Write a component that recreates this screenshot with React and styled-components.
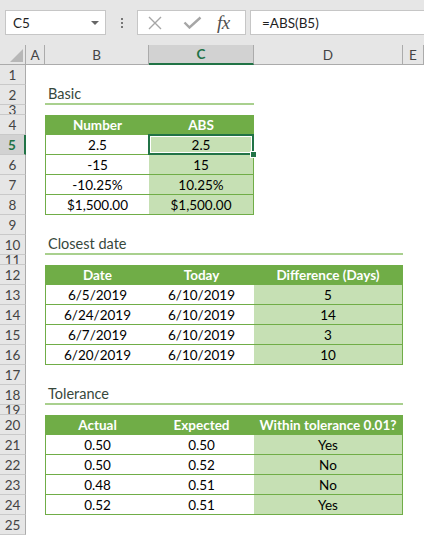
import React from "react";
import styled, { createGlobalStyle, css } from "styled-components";

const GREEN = "#70ad47";
const LIGHT = "#c6e0b4";
const EXCEL = "#217346";

const GlobalStyle = createGlobalStyle`
  html, body { margin: 0; padding: 0; background: #fff; }
  body {
    font-family: Lato, "Liberation Sans", sans-serif;
    width: 424px;
    height: 536px;
    overflow: hidden;
  }
`;

const Page = styled.div`
  width: 424px;
  height: 536px;
  overflow: hidden;
  background: #fff;
`;

/* ---------- formula bar ---------- */

const FormulaBar = styled.div`
  height: 45px;
  box-sizing: border-box;
  padding: 10px 0 0 5px;
  background: #e6e6e6;
  display: flex;
  align-items: flex-start;
`;

const Box = styled.div`
  height: 25px;
  box-sizing: border-box;
  background: #fff;
  border: 1px solid #c6c6c6;
  display: flex;
  align-items: center;
  font-size: 13.5px;
  color: #1f1f1f;
`;

const NameBox = styled(Box)`
  width: 101px;
  padding-left: 7px;
  justify-content: space-between;
`;

const Arrow = styled.span`
  width: 0;
  height: 0;
  margin-right: 6px;
  border-left: 4px solid transparent;
  border-right: 4px solid transparent;
  border-top: 4px solid #666;
`;

const Dots = styled.div`
  width: 31px;
  height: 25px;
  display: flex;
  flex-direction: column;
  align-items: center;
  justify-content: center;
  gap: 2px;
  span {
    width: 2px;
    height: 2px;
    background: #767676;
  }
`;

const FxBox = styled(Box)`
  width: 109px;
`;

const IconSlot = styled.span`
  display: flex;
  margin-left: ${(p) => p.$gap}px;
`;

const Fx = styled.span`
  margin-left: 15px;
  font-family: "Liberation Serif", "DejaVu Serif", serif;
  font-style: italic;
  font-size: 19px;
  color: #505050;
  letter-spacing: -0.5px;
`;

const FormulaInput = styled(Box)`
  flex: 1;
  margin-left: 4px;
  margin-right: -2px;
  padding-left: 11px;
`;

/* ---------- sheet ---------- */

const Sheet = styled.div`
  display: grid;
  grid-template-columns: 26px 19px 104px 105px 149px 1fr;
  grid-template-rows: ${(p) => p.$rows};
  font-size: 13.5px;
  color: #000;
`;

const Corner = styled.div`
  grid-column: 1;
  grid-row: 1;
  background: #e6e6e6;
  border-right: 1px solid #ababab;
  border-bottom: 1px solid #ababab;
  display: flex;
  align-items: flex-end;
  justify-content: flex-end;
  padding: 0 2px 2px 0;
  span {
    width: 0;
    height: 0;
    border-left: 13px solid transparent;
    border-bottom: 13px solid #b7b7b7;
  }
`;

const ColHead = styled.div`
  grid-row: 1;
  grid-column: ${(p) => p.$col};
  box-sizing: border-box;
  background: #e6e6e6;
  border-right: 1px solid #ababab;
  border-bottom: 1px solid #ababab;
  display: flex;
  align-items: center;
  justify-content: center;
  font-size: 13.5px;
  color: #444;
  ${(p) =>
    p.$active &&
    css`
      background: #d2d2d2;
      color: ${EXCEL};
      font-weight: 700;
      border-bottom: 2px solid ${EXCEL};
    `}
`;

const RowHead = styled.div`
  grid-column: 1;
  grid-row: ${(p) => p.$row};
  box-sizing: border-box;
  overflow: hidden;
  background: #e6e6e6;
  border-right: 1px solid #ababab;
  border-bottom: 1px solid #c9c9c9;
  display: flex;
  align-items: center;
  justify-content: center;
  font-size: 13.5px;
  color: #444;
  ${(p) =>
    p.$active &&
    css`
      background: #d2d2d2;
      color: ${EXCEL};
      font-weight: 700;
      border-right: 2px solid ${EXCEL};
    `}
`;

const Title = styled.div`
  grid-row: ${(p) => p.$row};
  grid-column: 3 / span ${(p) => p.$span};
  border-bottom: 2px solid #a9d08e;
  display: flex;
  align-items: flex-end;
  padding: 0 0 1px 3px;
  font-size: 14.5px;
  color: #37483c;
`;

const Cell = styled.div`
  position: relative;
  grid-row: ${(p) => p.$row};
  grid-column: ${(p) => p.$col};
  box-sizing: border-box;
  display: flex;
  align-items: center;
  justify-content: center;
  white-space: nowrap;
  background: ${(p) => (p.$result ? LIGHT : "#fff")};
  border-bottom: 1px solid ${GREEN};
  border-left: ${(p) => (p.$first ? `1px solid ${GREEN}` : "none")};
  border-right: ${(p) => (p.$last ? `1px solid ${GREEN}` : "none")};
  ${(p) =>
    p.$head &&
    css`
      background: ${GREEN};
      color: #fff;
      font-weight: 700;
      border-color: ${GREEN};
    `}
`;

const Selection = styled.div`
  position: absolute;
  left: -1px;
  top: -1px;
  right: -1px;
  bottom: -1px;
  z-index: 2;
  border: 2px solid ${EXCEL};
  box-shadow: inset 0 0 0 1px #fff;
  pointer-events: none;
`;

const Handle = styled.span`
  position: absolute;
  right: -5px;
  bottom: -5px;
  width: 5px;
  height: 5px;
  background: ${EXCEL};
  border: 1px solid #fff;
`;

/* ---------- data ---------- */

const ROWS = Array.from({ length: 25 }, (_, i) => ({
  n: i + 1,
  h: [3, 11, 19].includes(i + 1) ? 10 : 20,
}));

const TITLES = [
  { row: 2, text: "Basic", span: 2 },
  { row: 10, text: "Closest date", span: 3 },
  { row: 18, text: "Tolerance", span: 3 },
];

const TABLES = [
  {
    start: 4,
    result: 1,
    head: ["Number", "ABS"],
    body: [
      ["2.5", "2.5"],
      ["-15", "15"],
      ["-10.25%", "10.25%"],
      ["$1,500.00", "$1,500.00"],
    ],
  },
  {
    start: 12,
    result: 2,
    head: ["Date", "Today", "Difference (Days)"],
    body: [
      ["6/5/2019", "6/10/2019", "5"],
      ["6/24/2019", "6/10/2019", "14"],
      ["6/7/2019", "6/10/2019", "3"],
      ["6/20/2019", "6/10/2019", "10"],
    ],
  },
  {
    start: 20,
    result: 2,
    head: ["Actual", "Expected", "Within tolerance 0.01?"],
    body: [
      ["0.50", "0.50", "Yes"],
      ["0.50", "0.52", "No"],
      ["0.48", "0.51", "No"],
      ["0.52", "0.51", "Yes"],
    ],
  },
];

const LETTERS = ["A", "B", "C", "D", "E"];

const XIcon = () => (
  <svg width="16" height="14" viewBox="0 0 16 14">
    <path d="M2 1 L14 13 M14 1 L2 13" stroke="#a6a6a6" strokeWidth="1.4" fill="none" />
  </svg>
);

const CheckIcon = () => (
  <svg width="19" height="13" viewBox="0 0 19 13">
    <path d="M1.5 6.5 L6.5 11.5 L17.5 1.5" stroke="#a6a6a6" strokeWidth="2.4" fill="none" />
  </svg>
);

export default function App() {
  const template = ["20px", ...ROWS.map((r) => `${r.h}px`)].join(" ");

  return (
    <Page>
      <GlobalStyle />
      <FormulaBar>
        <NameBox>
          C5
          <Arrow />
        </NameBox>
        <Dots>
          <span />
          <span />
          <span />
        </Dots>
        <FxBox>
          <IconSlot $gap={9}>
            <XIcon />
          </IconSlot>
          <IconSlot $gap={20}>
            <CheckIcon />
          </IconSlot>
          <Fx>fx</Fx>
        </FxBox>
        <FormulaInput>=ABS(B5)</FormulaInput>
      </FormulaBar>

      <Sheet $rows={template}>
        <Corner>
          <span />
        </Corner>
        {LETTERS.map((l, i) => (
          <ColHead key={l} $col={i + 2} $active={l === "C"}>
            {l}
          </ColHead>
        ))}

        {ROWS.map((r) => (
          <RowHead key={r.n} $row={r.n + 1} $active={r.n === 5}>
            {r.n}
          </RowHead>
        ))}

        {TITLES.map((t) => (
          <Title key={t.row} $row={t.row + 1} $span={t.span}>
            {t.text}
          </Title>
        ))}

        {TABLES.map((t) =>
          [t.head, ...t.body].map((line, li) =>
            line.map((text, ci) => {
              const row = t.start + li;
              const selected = row === 5 && ci === 1;
              return (
                <Cell
                  key={`${row}-${ci}`}
                  $row={row + 1}
                  $col={ci + 3}
                  $head={li === 0}
                  $result={ci === t.result}
                  $first={ci === 0}
                  $last={ci === line.length - 1}
                >
                  {text}
                  {selected && (
                    <Selection>
                      <Handle />
                    </Selection>
                  )}
                </Cell>
              );
            })
          )
        )}
      </Sheet>
    </Page>
  );
}
